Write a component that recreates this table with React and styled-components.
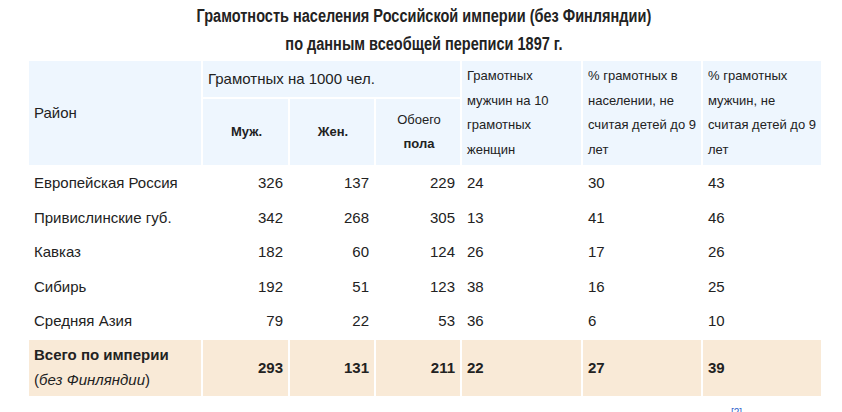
import React from "react";
import styled, { createGlobalStyle } from "styled-components";

const GlobalStyle = createGlobalStyle`
  html, body {
    margin: 0;
    padding: 0;
    background: #ffffff;
  }
  body {
    font-family: "Liberation Sans", Arial, sans-serif;
    color: #222222;
  }
`;

const rows = [
  { name: "Европейская Россия", men: 326, women: 137, both: 229, ratio: 24, pop: 30, male: 43 },
  { name: "Привислинские губ.", men: 342, women: 268, both: 305, ratio: 13, pop: 41, male: 46 },
  { name: "Кавказ", men: 182, women: 60, both: 124, ratio: 26, pop: 17, male: 26 },
  { name: "Сибирь", men: 192, women: 51, both: 123, ratio: 38, pop: 16, male: 25 },
  { name: "Средняя Азия", men: 79, women: 22, both: 53, ratio: 36, pop: 6, male: 10 }
];

const total = { men: 293, women: 131, both: 211, ratio: 22, pop: 27, male: 39 };

const App = () => {
  return (
    <React.Fragment>
      <GlobalStyle />
      <Wrapper>
        <Title>
          <TitleText>
            Грамотность населения Российской империи (без Финляндии)
            <br />
            по данным всеобщей переписи 1897 г.
          </TitleText>
        </Title>

        <Table>
          <colgroup>
            <col style={{ width: "174px" }} />
            <col style={{ width: "87px" }} />
            <col style={{ width: "86px" }} />
            <col style={{ width: "86px" }} />
            <col style={{ width: "121px" }} />
            <col style={{ width: "120px" }} />
            <col style={{ width: "120px" }} />
          </colgroup>
          <thead>
            <HeadRow $height={38}>
              <Th rowSpan={2}>Район</Th>
              <Th colSpan={3}>Грамотных на 1000 чел.</Th>
              <Th rowSpan={2} $small>Грамотных мужчин на 10 грамотных женщин</Th>
              <Th rowSpan={2} $small>% грамотных в населении, не считая детей до 9 лет</Th>
              <Th rowSpan={2} $small>% грамотных мужчин, не считая детей до 9 лет</Th>
            </HeadRow>
            <HeadRow $height={68}>
              <Th $center $bold $small>Муж.</Th>
              <Th $center $bold $small>Жен.</Th>
              <Th $center $small>
                Обоего
                <br />
                <b>пола</b>
              </Th>
            </HeadRow>
          </thead>
          <tbody>
            {rows.map((row, index) => (
              <BodyRow key={index}>
                <Td>{row.name}</Td>
                <Td $right>{row.men}</Td>
                <Td $right>{row.women}</Td>
                <Td $right>{row.both}</Td>
                <Td>{row.ratio}</Td>
                <Td>{row.pop}</Td>
                <Td>{row.male}</Td>
              </BodyRow>
            ))}
            <TotalRow>
              <Td $bold>
                Всего по империи
                <br />
                <Note>
                  (<i>без Финляндии</i>)
                </Note>
              </Td>
              <Td $right $bold>{total.men}</Td>
              <Td $right $bold>{total.women}</Td>
              <Td $right $bold>{total.both}</Td>
              <Td $bold>{total.ratio}</Td>
              <Td $bold>{total.pop}</Td>
              <Td $bold>{total.male}</Td>
            </TotalRow>
          </tbody>
        </Table>

        <Footnote>
          <Ref>[2]</Ref>
        </Footnote>
      </Wrapper>
    </React.Fragment>
  );
};

const Wrapper = styled.div`
  width: 794px;
  margin-left: 27px;
`;

const Title = styled.div`
  text-align: center;
  padding-top: 2px;
  height: 57px;
`;

/* the caption font is a narrow face; squeeze Liberation Sans to its width */
const TitleText = styled.span`
  display: inline-block;
  font-size: 17.5px;
  font-weight: bold;
  line-height: 28px;
  color: #222222;
  white-space: nowrap;
  transform: scaleX(0.83);
  transform-origin: center top;
`;

const Table = styled.table`
  width: 794px;
  border-collapse: collapse;
  table-layout: fixed;
  font-size: 15px;
  line-height: 24.5px;
`;

const HeadRow = styled.tr`
  height: ${p => p.$height}px;
`;

const Th = styled.th`
  background: #eef6fe;
  border: 2px solid #ffffff;
  padding: 0 3px 0 5px;
  vertical-align: middle;
  font-size: ${p => (p.$small ? "13px" : "15px")};
  text-align: ${p => (p.$center ? "center" : "left")};
  font-weight: ${p => (p.$bold ? "bold" : "normal")};
  color: #222222;
`;

const BodyRow = styled.tr`
  height: 34.6px;
`;

const TotalRow = styled.tr`
  height: 58px;
  background: #f9ead7;
`;

const Td = styled.td`
  border: 2px solid #ffffff;
  border-top: 0;
  padding: 0 5px;
  vertical-align: middle;
  text-align: ${p => (p.$right ? "right" : "left")};
  font-weight: ${p => (p.$bold ? "bold" : "normal")};
  color: #222222;
`;

const Note = styled.span`
  font-weight: normal;
`;

const Footnote = styled.div`
  padding-left: 704px;
  line-height: 12px;
  padding-top: 9px;
`;

const Ref = styled.sup`
  font-size: 10px;
  color: #3366cc;
  vertical-align: top;
`;

export default App;
